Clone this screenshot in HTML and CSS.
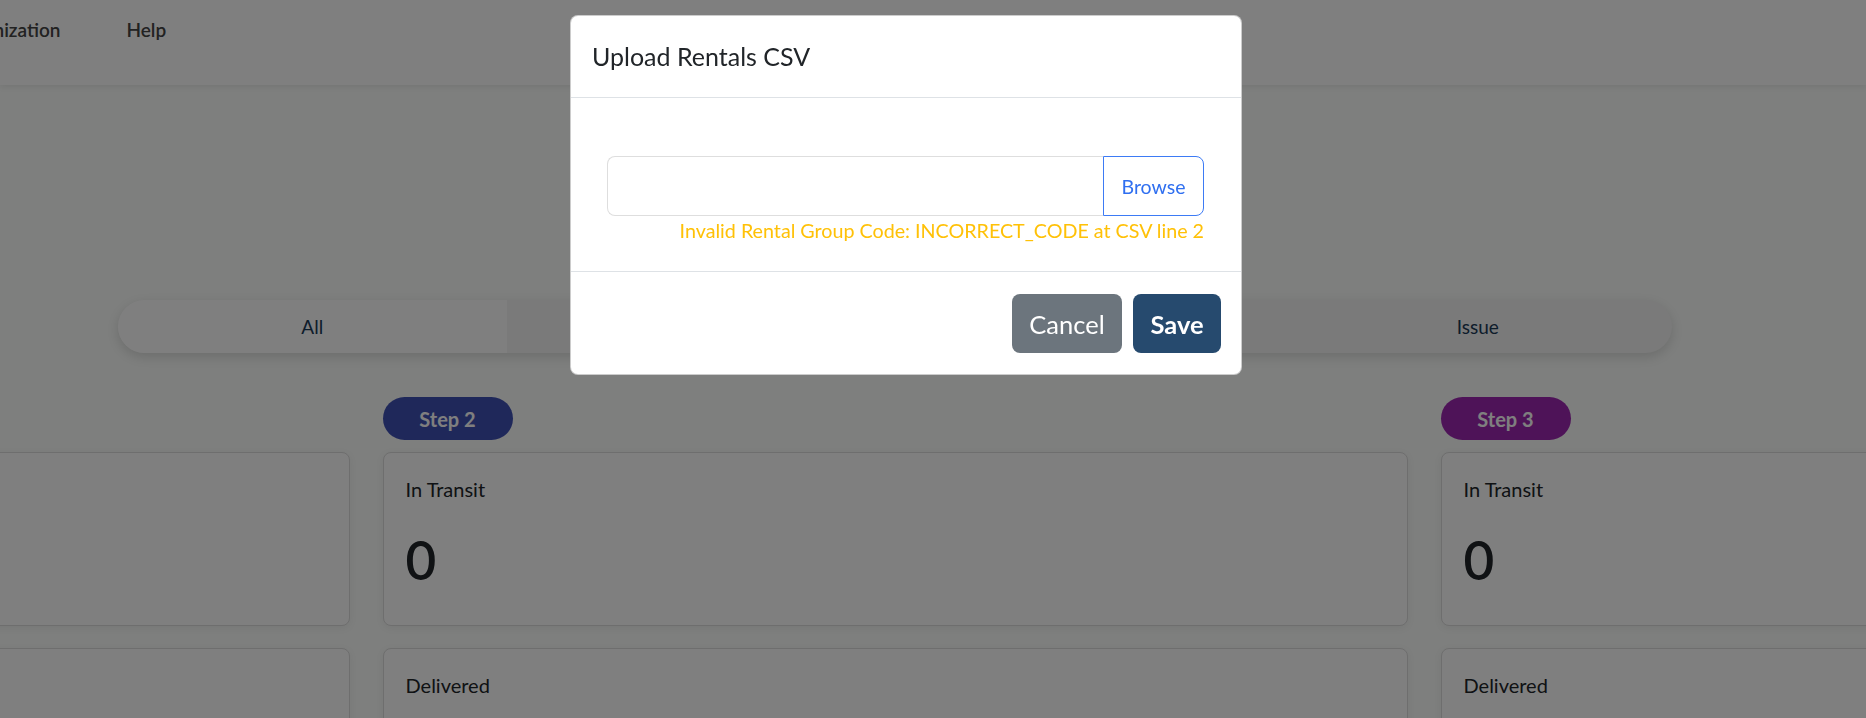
FILE: index.html
```html
<!DOCTYPE html>
<html lang="en">
<head>
  <meta charset="UTF-8">
  <title>Rentals - Upload CSV</title>
  <link rel="stylesheet" href="styles.css">
</head>
<body>
  <header class="navbar">
    <ul class="nav-links">
      <li><a href="#">Organization</a></li>
      <li><a href="#">Help</a></li>
    </ul>
  </header>

  <main class="page">
    <div class="tabs">
      <button class="tab active">All</button>
      <button class="tab">Pending</button>
      <button class="tab">Completed</button>
      <button class="tab">Issue</button>
    </div>

    <div class="steps">
      <section class="step">
        <span class="badge badge-step1">Step 1</span>
        <div class="card">
          <p class="card-label">Pending</p>
          <p class="card-value">0</p>
        </div>
        <div class="card">
          <p class="card-label">Ready</p>
          <p class="card-value">0</p>
        </div>
      </section>
      <section class="step">
        <span class="badge badge-step2">Step 2</span>
        <div class="card">
          <p class="card-label">In Transit</p>
          <p class="card-value">0</p>
        </div>
        <div class="card">
          <p class="card-label">Delivered</p>
          <p class="card-value">0</p>
        </div>
      </section>
      <section class="step">
        <span class="badge badge-step3">Step 3</span>
        <div class="card">
          <p class="card-label">In Transit</p>
          <p class="card-value">0</p>
        </div>
        <div class="card">
          <p class="card-label">Delivered</p>
          <p class="card-value">0</p>
        </div>
      </section>
    </div>
  </main>

  <!-- upload modal -->
  <div class="modal-backdrop"></div>
  <div class="modal-dialog">
    <div class="modal-header">
      <h5 class="modal-title">Upload Rentals CSV</h5>
    </div>
    <div class="modal-body">
      <div class="file-group">
        <div class="file-name"></div>
        <label class="file-browse">Browse</label>
      </div>
      <div class="file-error">Invalid Rental Group Code: INCORRECT_CODE at CSV line 2</div>
    </div>
    <div class="modal-footer">
      <button class="btn btn-cancel">Cancel</button>
      <button class="btn btn-save">Save</button>
    </div>
  </div>
</body>
</html>
```

FILE: styles.css
```css
* {
  box-sizing: border-box;
}

body {
  font-family: 'Lato', 'Open Sans', sans-serif;
  background-color: #fcfefc;
  color: #212529;
  margin: 0;
  overflow: hidden;
  height: 718px;
}

p {
  margin: 0;
}

.navbar {
  height: 85px;
  background-color: #fff;
  box-shadow: 0 2px 6px rgba(0, 0, 0, 0.08);
  padding-top: 18px;
}

.nav-links {
  list-style: none;
  display: flex;
  gap: 66px;
  margin: 0 0 0 -48px;
  padding: 0;
}

.nav-links a {
  color: #444;
  text-decoration: none;
  font-weight: 600;
  font-size: 19px;
  line-height: 24px;
}

.page {
  width: 1790px;
  padding-top: 215px;
}

.tabs {
  width: 1554px;
  height: 53px;
  margin: 0 auto;
  display: flex;
  background-color: #f4f4f4;
  border-radius: 27px;
  box-shadow: 0 4px 12px rgba(0, 0, 0, 0.14);
  overflow: hidden;
}

.tab {
  flex: 1;
  border: none;
  background: none;
  font-family: inherit;
  font-size: 19px;
  color: #1b3a57;
  padding: 0;
}

.tab.active {
  background-color: #fff;
}

.steps {
  display: flex;
  justify-content: center;
  gap: 33px;
  margin-top: 44px;
}

.step {
  flex: 0 0 1025px;
  display: flex;
  flex-direction: column;
  align-items: flex-start;
}

.badge {
  width: 130px;
  height: 43px;
  border-radius: 22px;
  color: #fff;
  font-weight: 700;
  font-size: 20px;
  display: flex;
  align-items: center;
  justify-content: center;
  margin-bottom: 12px;
}

.badge-step1 {
  background-color: #009688;
}

.badge-step2 {
  background-color: #3f51b5;
}

.badge-step3 {
  background-color: #9c27b0;
}

.card {
  align-self: stretch;
  height: 174px;
  background-color: #fff;
  border: 1px solid #dcdcdc;
  border-radius: 8px;
  box-shadow: 0 2px 8px rgba(0, 0, 0, 0.06);
  padding: 24px 22px;
  margin-bottom: 22px;
}

.card-label {
  font-size: 20px;
  line-height: 24px;
}

.card-value {
  font-size: 53px;
  font-weight: 600;
  line-height: 60px;
  margin-top: 29px;
}

/* modal */
.modal-backdrop {
  position: fixed;
  inset: 0;
  background-color: rgba(0, 0, 0, 0.5);
}

.modal-dialog {
  position: absolute;
  left: 570px;
  top: 15px;
  width: 672px;
  background-color: #fff;
  border: 1px solid rgba(0, 0, 0, 0.2);
  border-radius: 8px;
}

.modal-header {
  padding: 25px 21px 26px;
  border-bottom: 1px solid #dee2e6;
}

.modal-title {
  margin: 0;
  font-size: 25px;
  font-weight: 400;
  line-height: 30px;
}

.modal-body {
  padding: 58px 37px 25px 36px;
}

.file-group {
  display: flex;
  height: 60px;
}

.file-name {
  flex: 1;
  border: 1px solid #dedede;
  border-right: none;
  border-radius: 8px 0 0 8px;
}

.file-browse {
  width: 101px;
  border: 1px solid #3d7bf5;
  border-radius: 0 8px 8px 0;
  color: #2f6ff0;
  font-size: 19.5px;
  display: flex;
  align-items: center;
  justify-content: center;
}

.file-error {
  text-align: right;
  color: #ffc107;
  font-size: 19.7px;
  line-height: 30px;
}

.modal-footer {
  border-top: 1px solid #dee2e6;
  padding: 22px 20px 21px;
  display: flex;
  justify-content: flex-end;
  gap: 11px;
}

.btn {
  height: 59px;
  border: none;
  border-radius: 8px;
  color: #fff;
  font-family: inherit;
  font-size: 25.5px;
}

.btn-cancel {
  width: 110px;
  background-color: #6c757d;
}

.btn-save {
  width: 88px;
  background-color: #264a6e;
  font-weight: 700;
}
```
